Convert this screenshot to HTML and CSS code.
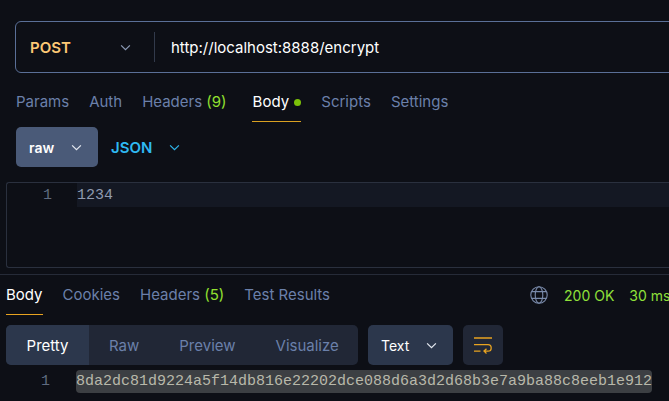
FILE: index.html
```html
<!DOCTYPE html>
<html lang="en">
<head>
<meta charset="utf-8">
<title>Postman request</title>
<link rel="stylesheet" href="styles.css">
</head>
<body>
<main class="app">
  <section class="request">
    <div class="urlbar">
      <span class="method">POST</span>
      <svg class="chev method-chev" viewBox="0 0 12 8"><path d="M1 1.5 6 6.5 11 1.5"/></svg>
      <span class="urlsep"></span>
      <span class="url">http://localhost:8888/encrypt</span>
    </div>
    <nav class="tabs req-tabs">
      <span class="tab">Params</span>
      <span class="tab">Auth</span>
      <span class="tab">Headers <b class="count">(9)</b></span>
      <span class="tab active body-tab">Body <i class="dot"></i></span>
      <span class="tab">Scripts</span>
      <span class="tab">Settings</span>
    </nav>
    <div class="bodybar">
      <div class="rawbtn">raw <svg class="chev white" viewBox="0 0 12 8"><path d="M1 1.5 6 6.5 11 1.5"/></svg></div>
      <div class="jsonbtn">JSON <svg class="chev blue" viewBox="0 0 12 8"><path d="M1 1.5 6 6.5 11 1.5"/></svg></div>
    </div>
    <div class="editor">
      <div class="line">
        <span class="ln">1</span>
        <span class="code">1234</span>
      </div>
    </div>
  </section>
  <section class="response">
    <div class="res-head">
      <nav class="tabs res-tabs">
        <span class="tab active">Body</span>
        <span class="tab">Cookies</span>
        <span class="tab">Headers <b class="count">(5)</b></span>
        <span class="tab">Test Results</span>
      </nav>
      <div class="status">
        <svg class="globe" viewBox="0 0 18 18"><circle cx="9" cy="9" r="8.2"/><ellipse cx="9" cy="9" rx="3.8" ry="8.2"/><path d="M1.6 5.6h14.8M1.6 12.4h14.8"/></svg>
        <span class="ok">200 OK</span>
        <span class="ok time">30 ms</span>
      </div>
    </div>
    <div class="res-tools">
      <div class="segment">
        <span class="seg on">Pretty</span>
        <span class="seg raw">Raw</span>
        <span class="seg preview">Preview</span>
        <span class="seg visual">Visualize</span>
      </div>
      <div class="textbtn">Text <svg class="chev white" viewBox="0 0 12 8"><path d="M1 1.5 6 6.5 11 1.5"/></svg></div>
      <div class="wrapbtn">
        <svg viewBox="0 0 18 16"><path d="M0 1h18M0 7.7h14a3.2 3.2 0 0 1 0 6.4H10M12.5 11.7 10 14.1l2.5 2.3M0 14.1h6.5"/></svg>
      </div>
    </div>
    <div class="output">
      <span class="ln">1</span>
      <span class="hash">8da2dc81d9224a5f14db816e22202dce088d6a3d2d68b3e7a9ba88c8eeb1e912</span>
    </div>
  </section>
</main>
</body>
</html>
```
FILE: styles.css
```css
* { box-sizing: border-box; }
html, body { margin: 0; height: 100%; }
body {
  background: #0d0f16;
  color: #6b80aa;
  font-family: Inter, "Liberation Sans", sans-serif;
  font-size: 15px;
  overflow: hidden;
}
.app { width: 669px; height: 401px; overflow: hidden; }
.chev { width: 11px; height: 7px; fill: none; stroke: #8b99b5; stroke-width: 1.4; flex: none; }
.chev.white { stroke: #e4e8f0; }
.chev.blue { stroke: #2fb4ea; }

.request { padding-top: 21px; }
.urlbar {
  display: flex;
  align-items: center;
  height: 52px;
  margin-left: 15px;
  margin-right: -20px;
  border: 1px solid #5a6f97;
  border-radius: 6px;
  padding-left: 14px;
}
.method { color: #fdc875; font-weight: 600; width: 90px; }
.method-chev { margin-right: 23px; }
.urlsep { width: 1px; height: 30px; background: #323a4b; margin-right: 16px; }
.url { color: #fff; font-weight: 400; }

.tabs { display: flex; }
.tab { color: #6b80aa; white-space: nowrap; }
.tab.active { color: #fff; border-bottom: 1px solid #e8a320; }
.count { color: #92e02f; font-weight: 400; }
.req-tabs { margin-top: 18px; padding-left: 16px; gap: 20px; height: 31px; }
.req-tabs .tab { height: 31px; line-height: 22px; }
.req-tabs .body-tab { margin-left: 5px; padding-left: 1px; border-bottom-color: #d9a021; }
.dot { display: inline-block; width: 7px; height: 7px; border-radius: 50%; background: #7cc109; margin-left: 1px; vertical-align: 1px; }

.bodybar { display: flex; align-items: center; margin: 5px 0 0 16px; height: 40px; }
.rawbtn {
  display: flex; align-items: center; gap: 17px;
  width: 82px; height: 40px;
  padding-left: 13px;
  background: #4a5a78;
  border-radius: 5px;
  color: #fff;
  font-size: 14px;
  font-weight: 600;
}
.jsonbtn { display: flex; align-items: center; gap: 17px; margin-left: 13px; color: #2fb9f2; font-weight: 600; }

.editor {
  margin: 15px 0 0 6px;
  height: 86px;
  border: 1px solid #2a303e;
  border-right: 0;
  border-radius: 3px 0 0 3px;
}
.line { display: flex; height: 24px; }
.ln { font-family: "Liberation Mono", monospace; font-size: 15px; color: #5f6b80; text-align: right; }
.line .ln { width: 45px; padding-top: 2px; line-height: 22px; }
.code {
  flex: 1;
  margin-left: 25px;
  padding-top: 2px;
  background: #141823;
  font-family: "Liberation Mono", monospace;
  font-size: 15px;
  line-height: 22px;
  color: #8f9bb0;
}

.response { margin-top: 6px; border-top: 1px solid #262b38; }
.res-head { display: flex; align-items: flex-start; height: 39px; }
.res-tabs { padding-left: 6px; gap: 20px; margin-top: 10px; }
.res-tabs .tab { height: 30px; line-height: 20px; }
.status { display: flex; align-items: center; margin: 10px 0 0 200px; height: 20px; flex: none; font-size: 14px; }
.globe { width: 18px; height: 18px; fill: none; stroke: #7a8bab; stroke-width: 1.1; margin-right: 16px; }
.ok { color: #8fe03a; white-space: nowrap; }
.time { margin-left: 15px; }

.res-tools { display: flex; margin: 11px 0 0 6px; height: 40px; }
.segment { display: flex; width: 352px; height: 40px; background: #212736; border-radius: 5px; overflow: hidden; }
.seg { display: flex; align-items: center; height: 40px; color: #6b80aa; }
.seg.on { width: 83px; justify-content: center; background: #2c374c; color: #fff; }
.seg.raw { margin-left: 20px; }
.seg.preview { margin-left: 40px; }
.seg.visual { margin-left: 40px; }
.textbtn {
  display: flex; align-items: center; gap: 17px;
  width: 85px; height: 40px; margin-left: 10px; padding-left: 13px;
  background: #2c374c; border-radius: 5px; color: #fff;
  font-size: 14px;
}
.wrapbtn {
  display: flex; align-items: center; justify-content: center;
  width: 40px; height: 40px; margin-left: 10px;
  background: #212736; border-radius: 5px;
}
.wrapbtn svg { width: 18px; height: 16px; fill: none; stroke: #e8a320; stroke-width: 1.3; overflow: visible; }

.output { display: flex; align-items: center; margin-top: 5px; height: 23px; }
.output .ln { width: 50px; line-height: 23px; }
.hash {
  margin-left: 26px;
  width: 576px;
  height: 23px;
  line-height: 23px;
  background: #3c3f43;
  border-radius: 4px;
  color: #b8b8aa;
  font-family: "Liberation Mono", monospace;
  font-size: 15px;
  white-space: nowrap;
}
```
